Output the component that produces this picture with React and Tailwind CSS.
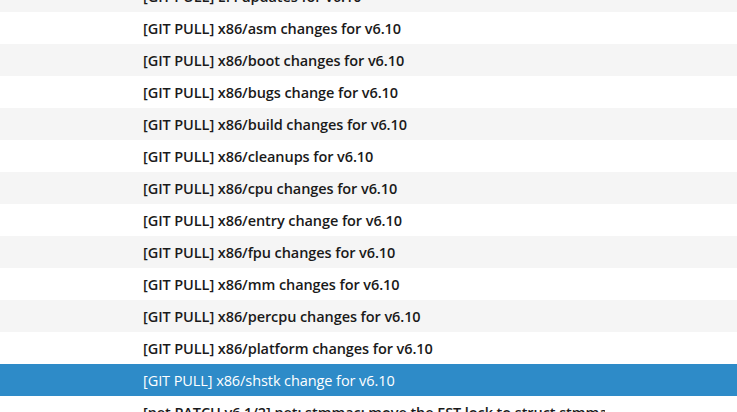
import React from "react";

const rows = [
  "[GIT PULL] EFI updates for v6.10",
  "[GIT PULL] x86/asm changes for v6.10",
  "[GIT PULL] x86/boot changes for v6.10",
  "[GIT PULL] x86/bugs change for v6.10",
  "[GIT PULL] x86/build changes for v6.10",
  "[GIT PULL] x86/cleanups for v6.10",
  "[GIT PULL] x86/cpu changes for v6.10",
  "[GIT PULL] x86/entry change for v6.10",
  "[GIT PULL] x86/fpu changes for v6.10",
  "[GIT PULL] x86/mm changes for v6.10",
  "[GIT PULL] x86/percpu changes for v6.10",
  "[GIT PULL] x86/platform changes for v6.10",
  "[GIT PULL] x86/shstk change for v6.10",
  "[net PATCH v6 1/2] net: stmmac: move the EST lock to struct stmmac_priv",
];

export default function App() {
  return (
    <div className="w-[737px] h-[412px] overflow-hidden bg-white" style={{ fontFamily: '"Open Sans", sans-serif' }}>
      <div className="flex flex-col -mt-[20px]">
        {rows.map((t, i) => {
          const selected = i === 12;
          const bg = selected ? "bg-[#2e8bc8] text-white font-medium" : i % 2 === 0 ? "bg-[#f5f5f5] text-[#1a1a1a] font-semibold" : "bg-white text-[#1a1a1a] font-semibold";
          return (
            <div key={i} className={`h-8 flex items-center pl-[143px] pt-[2px] ${bg}`}>
              <span className="text-[14.5px] tracking-[-0.08px] whitespace-nowrap overflow-hidden w-[462px]">{t}</span>
            </div>
          );
        })}
      </div>
    </div>
  );
}
